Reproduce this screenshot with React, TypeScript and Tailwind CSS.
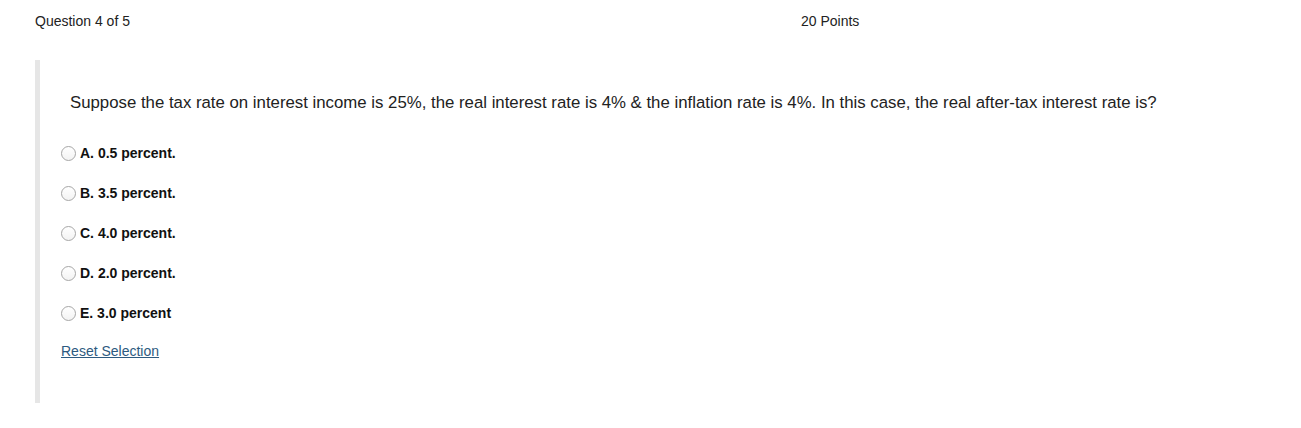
import React from 'react';

const options = ['A. 0.5 percent.', 'B. 3.5 percent.', 'C. 4.0 percent.', 'D. 2.0 percent.', 'E. 3.0 percent'];

const App: React.FC = () => {
  return (
    <div className="w-[1301px] h-[428px] bg-white text-[#222] font-['Liberation_Sans',Arial,sans-serif]">
      {/* Header */}
      <div className="flex pt-[13px] pl-[35px] text-[14px] leading-[16px]">
        <span className="w-[766px]">Question 4 of 5</span>
        <span>20 Points</span>
      </div>

      {/* Question */}
      <section className="ml-[35px] mt-[31px] h-[343px] border-l-[5px] border-[#e6e6e6] flex flex-col">
        <p className="pl-[30px] pt-[34px] text-[16.8px] leading-[18px]">
          Suppose the tax rate on interest income is 25%, the real interest rate is 4% &amp; the inflation rate is 4%. In this case, the real after-tax interest rate is?
        </p>
        <div className="mt-[21px] flex flex-col pl-[21px]">
          {options.map((opt) => (
            <label key={opt} className="h-[40px] flex items-center gap-[4px] text-[14px] font-bold text-[#111] cursor-pointer">
              <span className="w-[15px] h-[15px] rounded-full border border-[#a6a6a6] bg-gradient-to-b from-white to-[#f3f3f3]" />
              {opt}
            </label>
          ))}
        </div>
        <a href="#" className="ml-[21px] mt-[10px] text-[14px] leading-[16px] text-[#2d5a80] underline self-start">
          Reset Selection
        </a>
      </section>
    </div>
  );
};

export default App;
